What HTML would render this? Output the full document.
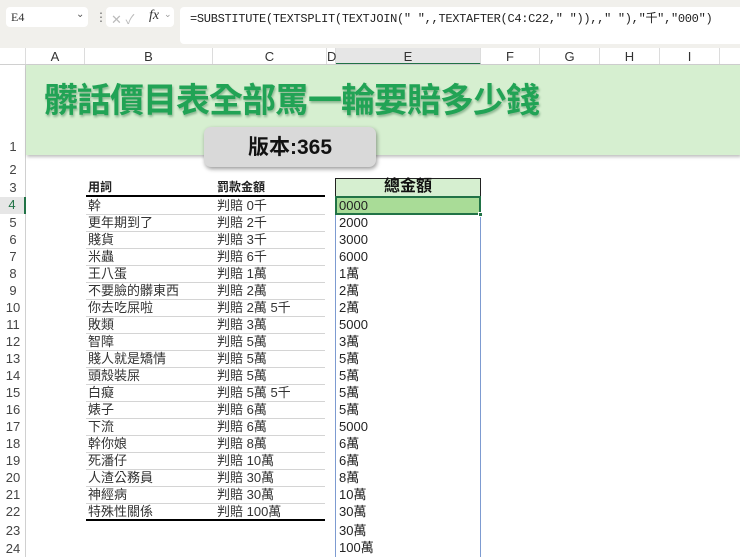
<!DOCTYPE html>
<html><head><meta charset="utf-8"><style>
*{margin:0;padding:0;box-sizing:border-box}
body{width:740px;height:557px;overflow:hidden;background:#fff;position:relative;font-family:"Liberation Sans","Noto Sans CJK TC",sans-serif;}
.a{position:absolute}
.top{left:0;top:0;width:740px;height:48px;background:#f1f0ec}
.box{background:#fff;border-radius:4px}
.colh{top:48px;height:17px;font-size:13px;color:#333;text-align:center;line-height:17px;border-right:1px solid #dcdcdc;background:#fff}
.rn{left:0;width:26px;text-align:center;font-size:13px;color:#444;line-height:16px;height:16px}
.c{font-size:13px;color:#333;white-space:nowrap;line-height:16px;height:16px}
.sep{left:86px;width:239px;height:1px;background:#d4d4d4}
.ev{left:339px;font-size:13px;color:#222;line-height:16px;height:16px}
</style></head><body>
<div class="a top"></div>
<div class="a box" style="left:6px;top:7px;width:82px;height:20px"></div>
<div class="a" style="left:11px;top:10px;font-family:'Liberation Serif',serif;font-size:12px;color:#333">E4</div>
<div class="a" style="left:76px;top:9px;font-size:10px;color:#555">&#8964;</div>
<div class="a" style="left:95px;top:10px;font-size:12px;color:#666">&#8942;</div>
<div class="a box" style="left:106px;top:7px;width:68px;height:20px"></div>
<div class="a" style="left:111px;top:9px;font-size:13px;color:#bbb">&#10005; &#10003;</div>
<div class="a" style="left:149px;top:8px;font-family:'Liberation Serif',serif;font-style:italic;font-size:14px;color:#333">fx</div>
<div class="a" style="left:164px;top:9px;font-size:9px;color:#999">&#8964;</div>
<div class="a box" style="left:180px;top:7px;width:560px;height:37px;border-radius:4px 0 0 4px"></div>
<div class="a" style="left:190px;top:11px;font-family:'Liberation Mono','Noto Sans CJK TC',monospace;font-size:12px;line-height:16px;color:#222;white-space:nowrap;letter-spacing:-0.3px">=SUBSTITUTE(TEXTSPLIT(TEXTJOIN(" ",,TEXTAFTER(C4:C22," ")),," "),"千","000")</div>

<div class="a" style="left:0;top:48px;width:26px;height:17px;background:#fff;border-right:1px solid #dcdcdc"></div>
<div class="a colh" style="left:26px;width:59px">A</div>
<div class="a colh" style="left:85px;width:128px">B</div>
<div class="a colh" style="left:213px;width:114px">C</div>
<div class="a colh" style="left:327px;width:9px">D</div>
<div class="a colh" style="left:336px;width:145px;background:#e6e6e6;border-bottom:2px solid #217346">E</div>
<div class="a colh" style="left:481px;width:59px">F</div>
<div class="a colh" style="left:540px;width:60px">G</div>
<div class="a colh" style="left:600px;width:60px">H</div>
<div class="a colh" style="left:660px;width:60px">I</div>
<div class="a" style="left:0;top:64px;width:740px;height:1px;background:#d0d0d0"></div>
<div class="a" style="left:25px;top:65px;width:1px;height:492px;background:#d0d0d0"></div>

<div class="a" style="left:26px;top:65px;width:714px;height:90px;background:#d6efd0;box-shadow:1px 2px 3px rgba(0,0,0,.25)"></div>
<div class="a" style="left:44px;top:79px;font-size:34px;line-height:44px;font-weight:bold;color:#21a355;letter-spacing:-1px;white-space:nowrap;text-shadow:1px 2px 2px rgba(0,80,30,.35)">髒話價目表全部罵一輪要賠多少錢</div>
<div class="a" style="left:204px;top:127px;width:172px;height:40px;background:#d9d9d9;border-radius:7px;box-shadow:1px 2px 4px rgba(0,0,0,.4)"></div>
<div class="a" style="left:204px;top:134px;width:172px;text-align:center;font-size:21px;line-height:28px;color:#111;font-weight:bold">版本:365</div>

<div class="a rn" style="top:139px">1</div>
<div class="a rn" style="top:162px">2</div>
<div class="a rn" style="top:180px">3</div>
<div class="a rn" style="top:197px;background:#e6e6e6;color:#217346;border-right:2px solid #217346;height:17px">4</div>
<div class="a rn" style="top:215px">5</div><div class="a rn" style="top:232px">6</div><div class="a rn" style="top:249px">7</div><div class="a rn" style="top:266px">8</div><div class="a rn" style="top:283px">9</div><div class="a rn" style="top:300px">10</div><div class="a rn" style="top:317px">11</div><div class="a rn" style="top:334px">12</div><div class="a rn" style="top:351px">13</div><div class="a rn" style="top:368px">14</div><div class="a rn" style="top:385px">15</div><div class="a rn" style="top:402px">16</div><div class="a rn" style="top:419px">17</div><div class="a rn" style="top:436px">18</div><div class="a rn" style="top:453px">19</div><div class="a rn" style="top:470px">20</div><div class="a rn" style="top:487px">21</div><div class="a rn" style="top:504px">22</div><div class="a rn" style="top:523px">23</div><div class="a rn" style="top:541px">24</div>

<div class="a c" style="left:88px;top:179px;font-size:12px;font-weight:bold;color:#222">用詞</div>
<div class="a c" style="left:217px;top:179px;font-size:12px;font-weight:bold;color:#222">罰款金額</div>
<div class="a" style="left:86px;top:195px;width:239px;height:2px;background:#000"></div>
<div class="a" style="left:86px;top:519px;width:239px;height:2px;background:#000"></div>

<div class="a c" style="left:88px;top:198px">幹</div><div class="a c" style="left:217px;top:198px">判賠 0千</div>
<div class="a c" style="left:88px;top:215px">更年期到了</div><div class="a c" style="left:217px;top:215px">判賠 2千</div>
<div class="a c" style="left:88px;top:232px">賤貨</div><div class="a c" style="left:217px;top:232px">判賠 3千</div>
<div class="a c" style="left:88px;top:249px">米蟲</div><div class="a c" style="left:217px;top:249px">判賠 6千</div>
<div class="a c" style="left:88px;top:266px">王八蛋</div><div class="a c" style="left:217px;top:266px">判賠 1萬</div>
<div class="a c" style="left:88px;top:283px">不要臉的髒東西</div><div class="a c" style="left:217px;top:283px">判賠 2萬</div>
<div class="a c" style="left:88px;top:300px">你去吃屎啦</div><div class="a c" style="left:217px;top:300px">判賠 2萬 5千</div>
<div class="a c" style="left:88px;top:317px">敗類</div><div class="a c" style="left:217px;top:317px">判賠 3萬</div>
<div class="a c" style="left:88px;top:334px">智障</div><div class="a c" style="left:217px;top:334px">判賠 5萬</div>
<div class="a c" style="left:88px;top:351px">賤人就是矯情</div><div class="a c" style="left:217px;top:351px">判賠 5萬</div>
<div class="a c" style="left:88px;top:368px">頭殼裝屎</div><div class="a c" style="left:217px;top:368px">判賠 5萬</div>
<div class="a c" style="left:88px;top:385px">白癡</div><div class="a c" style="left:217px;top:385px">判賠 5萬 5千</div>
<div class="a c" style="left:88px;top:402px">婊子</div><div class="a c" style="left:217px;top:402px">判賠 6萬</div>
<div class="a c" style="left:88px;top:419px">下流</div><div class="a c" style="left:217px;top:419px">判賠 6萬</div>
<div class="a c" style="left:88px;top:436px">幹你娘</div><div class="a c" style="left:217px;top:436px">判賠 8萬</div>
<div class="a c" style="left:88px;top:453px">死潘仔</div><div class="a c" style="left:217px;top:453px">判賠 10萬</div>
<div class="a c" style="left:88px;top:470px">人渣公務員</div><div class="a c" style="left:217px;top:470px">判賠 30萬</div>
<div class="a c" style="left:88px;top:487px">神經病</div><div class="a c" style="left:217px;top:487px">判賠 30萬</div>
<div class="a c" style="left:88px;top:504px">特殊性關係</div><div class="a c" style="left:217px;top:504px">判賠 100萬</div>

<div class="a sep" style="top:214px"></div><div class="a sep" style="top:231px"></div><div class="a sep" style="top:248px"></div><div class="a sep" style="top:265px"></div><div class="a sep" style="top:282px"></div><div class="a sep" style="top:299px"></div><div class="a sep" style="top:316px"></div><div class="a sep" style="top:333px"></div><div class="a sep" style="top:350px"></div><div class="a sep" style="top:367px"></div><div class="a sep" style="top:384px"></div><div class="a sep" style="top:401px"></div><div class="a sep" style="top:418px"></div><div class="a sep" style="top:435px"></div><div class="a sep" style="top:452px"></div><div class="a sep" style="top:469px"></div><div class="a sep" style="top:486px"></div><div class="a sep" style="top:503px"></div>

<div class="a" style="left:335px;top:178px;width:146px;height:19px;background:#d6efd0;border:1px solid #222"></div>
<div class="a" style="left:335px;top:178px;width:146px;text-align:center;font-size:16px;line-height:18px;font-weight:bold;color:#111">總金額</div>
<div class="a" style="left:335px;top:197px;width:146px;height:360px;border-left:1px solid #7d9bd1;border-right:1px solid #7d9bd1"></div>
<div class="a" style="left:335px;top:196px;width:146px;height:19px;background:#a9dc97;border:2px solid #217346"></div>
<div class="a" style="left:478px;top:212px;width:5px;height:5px;background:#217346;border:1px solid #fff"></div>

<div class="a ev" style="top:198px">0000</div>
<div class="a ev" style="top:215px">2000</div><div class="a ev" style="top:232px">3000</div><div class="a ev" style="top:249px">6000</div>
<div class="a ev" style="top:266px">1萬</div><div class="a ev" style="top:283px">2萬</div><div class="a ev" style="top:300px">2萬</div>
<div class="a ev" style="top:317px">5000</div><div class="a ev" style="top:334px">3萬</div><div class="a ev" style="top:351px">5萬</div>
<div class="a ev" style="top:368px">5萬</div><div class="a ev" style="top:385px">5萬</div><div class="a ev" style="top:402px">5萬</div>
<div class="a ev" style="top:419px">5000</div><div class="a ev" style="top:436px">6萬</div><div class="a ev" style="top:453px">6萬</div>
<div class="a ev" style="top:470px">8萬</div><div class="a ev" style="top:487px">10萬</div><div class="a ev" style="top:504px">30萬</div>
<div class="a ev" style="top:523px">30萬</div><div class="a ev" style="top:540px">100萬</div>
</body></html>
